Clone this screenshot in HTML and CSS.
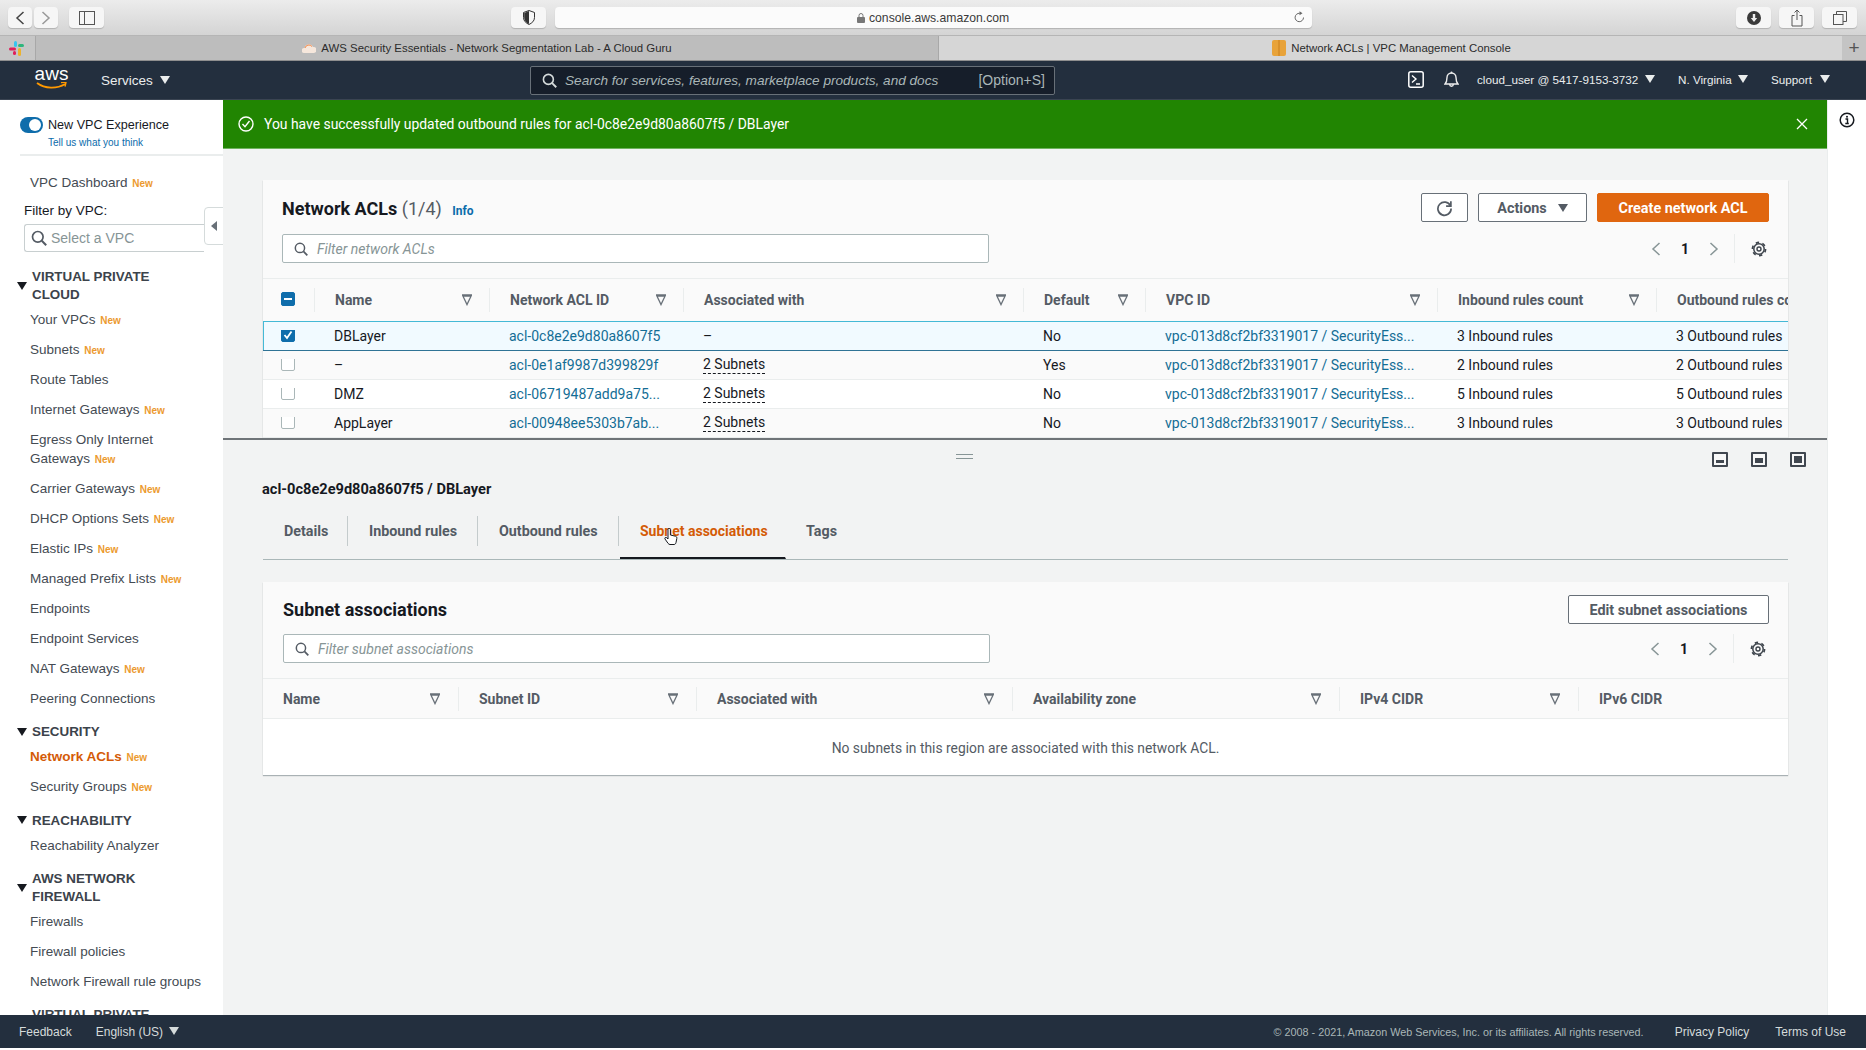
FILE: index.html
```html
<!DOCTYPE html>
<html lang="en">
<head>
<meta charset="utf-8">
<title>Network ACLs | VPC Management Console</title>
<link rel="stylesheet" href="styles.css">
</head>
<body>
<svg class="sprite" aria-hidden="true">
  <symbol id="i-search" viewBox="0 0 16 16"><circle cx="6.8" cy="6.8" r="5.3" fill="none" stroke="currentColor" stroke-width="1.7"/><path d="M10.8 10.8l4.4 4.4" stroke="currentColor" stroke-width="2" fill="none"/></symbol>
  <symbol id="i-filter" viewBox="0 0 12 12"><path d="M1 1h10M2 2.2h8L6 10.6z" fill="none" stroke="currentColor" stroke-width="1.3"/></symbol>
  <symbol id="i-gear" viewBox="0 0 16 16"><circle cx="8" cy="8" r="5.2" fill="none" stroke="currentColor" stroke-width="1.5"/><circle cx="8" cy="8" r="6.6" fill="none" stroke="currentColor" stroke-width="1.6" stroke-dasharray="3.4 3.5"/><circle cx="8" cy="8" r="2" fill="none" stroke="currentColor" stroke-width="1.4"/></symbol>
  <symbol id="i-prev" viewBox="0 0 10 16"><path d="M8.500 2L2 8l6.500 6" fill="none" stroke="currentColor" stroke-width="1.500"/></symbol>
  <symbol id="i-next" viewBox="0 0 10 16"><path d="M1.500 2L8 8l-6.500 6" fill="none" stroke="currentColor" stroke-width="1.500"/></symbol>
</svg>

<header class="toolbar">
  <div class="tool-group">
    <span class="tool tool-nav"><svg width="10" height="16"><use href="#i-prev"/></svg></span>
    <span class="tool tool-nav tool-dim"><svg width="10" height="16"><use href="#i-next"/></svg></span>
    <span class="tool tool-side"><svg width="16" height="14" viewBox="0 0 16 14"><rect x=".5" y=".5" width="15" height="13" fill="none" stroke="currentColor"/><path d="M5.500 1v12" stroke="currentColor"/></svg></span>
  </div>
  <span class="tool tool-shield"><svg width="12" height="15" viewBox="0 0 12 15"><path d="M6 .5l5.500 2v5c0 3.500-2.500 5.500-5.500 7-3-1.500-5.500-3.500-5.500-7v-5z" fill="none" stroke="#333"/><path d="M6 1v13C3.300 12.600 1.200 11 1.200 7.500V3z" fill="#333"/></svg></span>
  <div class="url">
    <svg class="url-lock" width="8" height="10" viewBox="0 0 8 10"><rect y="4" width="8" height="6" rx="1" fill="#777"/><path d="M2 4V2.500a2 2 0 014 0V4" fill="none" stroke="#777"/></svg>
    <span>console.aws.amazon.com</span>
    <svg class="url-reload" width="11" height="13" viewBox="0 0 11 13"><path d="M9.500 6.500a4.200 4.200 0 11-3.800-4.200" fill="none" stroke="#666"/><path d="M5.500 .2l3 2-3 2z" fill="#666"/></svg>
  </div>
  <div class="tool-group tool-right">
    <span class="tool tool-act"><svg width="14" height="14" viewBox="0 0 14 14"><circle cx="7" cy="7" r="7" fill="#3a3a3a"/><path d="M5.800 3h2.400v4h2L7 11 3.800 7h2z" fill="#eee"/></svg></span>
    <span class="tool tool-act"><svg width="12" height="18" viewBox="0 0 12 18"><path d="M3.500 6.500H1v10.500h10V6.500H8.500M6 11V1M3.500 3.500L6 1l2.500 2.500" fill="none" stroke="#555"/></svg></span>
    <span class="tool tool-act"><svg width="14" height="14" viewBox="0 0 14 14"><rect x=".5" y="3.500" width="9.500" height="10" fill="none" stroke="#555"/><path d="M3.500 3.500V.5h10v10h-3.500" fill="none" stroke="#555"/></svg></span>
  </div>
</header>

<nav class="tabstrip">
  <span class="tab-pin"><svg width="15" height="15" viewBox="0 0 15 15"><rect x="5" y="0" width="3" height="6" rx="1.500" fill="#36c5f0"/><rect x="9" y="3" width="6" height="3" rx="1.500" fill="#2eb67d"/><rect x="0" y="6.500" width="7" height="3" rx="1.500" fill="#e01e5a"/><rect x="9" y="7" width="3" height="8" rx="1.500" fill="#ecb22e"/><rect x="4" y="10" width="3" height="4" rx="1.500" fill="#e01e5a"/></svg></span>
  <span class="browser-tab">
    <svg width="14" height="10" viewBox="0 0 14 10"><path d="M2 10a2.500 2.500 0 01.500-5A4.500 4.500 0 0111 4a3 3 0 011 6z" fill="#f6e7dc"/><path d="M3 5a4 4 0 017-1.500" fill="none" stroke="#f28a4b"/></svg>
    AWS Security Essentials - Network Segmentation Lab - A Cloud Guru
  </span>
  <span class="browser-tab browser-tab-active">
    <svg width="14" height="16" viewBox="0 0 14 16"><rect width="14" height="16" rx="2" fill="#e8a33a"/><path d="M7 0v16" stroke="#c97e1c"/></svg>
    Network ACLs | VPC Management Console
  </span>
  <span class="tab-plus">+</span>
</nav>

<nav class="topnav">
  <span class="aws-logo">aws<svg width="31" height="9" viewBox="0 0 31 9"><path d="M1 1c8 6 20 6 28 1" fill="none" stroke="#f90" stroke-width="1.800"/><path d="M25 .6l5-.6-1 4.500" fill="none" stroke="#f90" stroke-width="1.500"/></svg></span>
  <span class="nav-services">Services <i class="caret"></i></span>
  <div class="nav-search">
    <svg width="15" height="15"><use href="#i-search"/></svg>
    <em>Search for services, features, marketplace products, and docs</em>
    <span>[Option+S]</span>
  </div>
  <div class="nav-right">
    <svg class="nav-term" width="16" height="17" viewBox="0 0 16 17"><rect x=".8" y=".8" width="14.400" height="15.400" rx="2" fill="none" stroke="#fff" stroke-width="1.500"/><path d="M4 4.500L8 8l-4 3.500M8 13h4" fill="none" stroke="#fff" stroke-width="1.400"/></svg>
    <svg class="nav-bell" width="15" height="17" viewBox="0 0 15 17"><circle cx="7.500" cy="1.500" r="1" fill="#eee"/><path d="M1 13c2-2 2-3 2-6.500a4.500 4.500 0 019 0c0 3.500 0 4.500 2 6.500zM5.700 13.500a1.800 1.800 0 003.600 0" fill="none" stroke="#eee" stroke-width="1.400"/></svg>
    <span class="nav-user">cloud_user @ 5417-9153-3732 <i class="caret"></i></span>
    <span class="nav-region">N. Virginia <i class="caret"></i></span>
    <span class="nav-support">Support <i class="caret"></i></span>
  </div>
</nav>

<div class="workspace">
  <aside class="sidebar">
    <div class="side-intro">
      <div class="side-toggle"><span class="switch"></span>New VPC Experience</div>
      <a class="side-tell">Tell us what you think</a>
    </div>
    <a class="side-item">VPC Dashboard <b>New</b></a>
    <div class="side-filter-label">Filter by VPC:</div>
    <div class="side-select"><svg width="16" height="16"><use href="#i-search"/></svg>Select a VPC</div>
    <span class="side-collapse"></span>

    <h3 class="side-head">VIRTUAL PRIVATE CLOUD</h3>
    <a class="side-item">Your VPCs <b>New</b></a>
    <a class="side-item">Subnets <b>New</b></a>
    <a class="side-item">Route Tables</a>
    <a class="side-item">Internet Gateways <b>New</b></a>
    <a class="side-item">Egress Only Internet Gateways <b>New</b></a>
    <a class="side-item">Carrier Gateways <b>New</b></a>
    <a class="side-item">DHCP Options Sets <b>New</b></a>
    <a class="side-item">Elastic IPs <b>New</b></a>
    <a class="side-item">Managed Prefix Lists <b>New</b></a>
    <a class="side-item">Endpoints</a>
    <a class="side-item">Endpoint Services</a>
    <a class="side-item">NAT Gateways <b>New</b></a>
    <a class="side-item">Peering Connections</a>
    <h3 class="side-head">SECURITY</h3>
    <a class="side-item side-current">Network ACLs <b>New</b></a>
    <a class="side-item">Security Groups <b>New</b></a>
    <h3 class="side-head">REACHABILITY</h3>
    <a class="side-item">Reachability Analyzer</a>
    <h3 class="side-head">AWS NETWORK FIREWALL</h3>
    <a class="side-item">Firewalls</a>
    <a class="side-item">Firewall policies</a>
    <a class="side-item">Network Firewall rule groups</a>
    <h3 class="side-head">VIRTUAL PRIVATE NETWORK</h3>
  </aside>

  <main class="main">
    <div class="flash">
      <svg width="16" height="16" viewBox="0 0 16 16"><circle cx="8" cy="8" r="7" fill="none" stroke="#fff" stroke-width="1.400"/><path d="M4.500 8l2.500 2.700L11.500 5" fill="none" stroke="#fff" stroke-width="1.400"/></svg>
      <span>You have successfully updated outbound rules for acl-0c8e2e9d80a8607f5 / DBLayer</span>
      <svg class="flash-close" width="12" height="12" viewBox="0 0 12 12"><path d="M1 1l10 10M11 1L1 11" stroke="#fff" stroke-width="1.300"/></svg>
    </div>

    <section class="pane-top">
      <div class="card card-top">
        <div class="card-head">
          <div class="head-row">
            <h2 class="card-title">Network ACLs <span>(1/4)</span> <a>Info</a></h2>
            <button class="btn btn-icon"><svg width="17" height="17" viewBox="0 0 16 16"><path d="M13.600 5.500A6.200 6.200 0 1014.200 8" fill="none" stroke="#545b64" stroke-width="1.600"/><path d="M14 1.200v4.500H9.500" fill="none" stroke="#545b64" stroke-width="1.600"/></svg></button>
            <button class="btn btn-actions">Actions <i class="caret caret-dark"></i></button>
            <button class="btn btn-primary">Create network ACL</button>
          </div>
          <div class="filter-row filter-row-top">
            <div class="filter"><svg width="14" height="14"><use href="#i-search"/></svg><em>Filter network ACLs</em></div>
            <div class="pager">
              <svg width="10" height="16"><use href="#i-prev"/></svg><b>1</b><svg width="10" height="16"><use href="#i-next"/></svg>
              <span class="pager-gear"><svg width="16" height="16"><use href="#i-gear"/></svg></span>
            </div>
          </div>
        </div>
        <div class="grid-acl grid-head">
          <div class="hcell hcell-check"><span class="check check-mixed"></span></div>
          <div class="hcell"><span>Name</span><svg width="12" height="12"><use href="#i-filter"/></svg></div>
          <div class="hcell"><span>Network ACL ID</span><svg width="12" height="12"><use href="#i-filter"/></svg></div>
          <div class="hcell"><span>Associated with</span><svg width="12" height="12"><use href="#i-filter"/></svg></div>
          <div class="hcell"><span>Default</span><svg width="12" height="12"><use href="#i-filter"/></svg></div>
          <div class="hcell"><span>VPC ID</span><svg width="12" height="12"><use href="#i-filter"/></svg></div>
          <div class="hcell"><span>Inbound rules count</span><svg width="12" height="12"><use href="#i-filter"/></svg></div>
          <div class="hcell hcell-last"><span>Outbound rules count</span></div>
        </div>
        <div class="grid-acl row row-selected">
          <div class="cell"><span class="check check-on"><svg width="10" height="10" viewBox="0 0 10 10"><path d="M1.500 5l2.500 3 4.500-6.500" fill="none" stroke="#fff" stroke-width="1.800"/></svg></span></div>
          <div class="cell">DBLayer</div><div class="cell"><a>acl-0c8e2e9d80a8607f5</a></div><div class="cell">–</div><div class="cell">No</div>
          <div class="cell"><a>vpc-013d8cf2bf3319017 / SecurityEss...</a></div><div class="cell">3 Inbound rules</div><div class="cell">3 Outbound rules</div>
        </div>
        <div class="grid-acl row row-alt">
          <div class="cell"><span class="check"></span></div>
          <div class="cell">–</div><div class="cell"><a>acl-0e1af9987d399829f</a></div><div class="cell"><u>2 Subnets</u></div><div class="cell">Yes</div>
          <div class="cell"><a>vpc-013d8cf2bf3319017 / SecurityEss...</a></div><div class="cell">2 Inbound rules</div><div class="cell">2 Outbound rules</div>
        </div>
        <div class="grid-acl row">
          <div class="cell"><span class="check"></span></div>
          <div class="cell">DMZ</div><div class="cell"><a>acl-06719487add9a75...</a></div><div class="cell"><u>2 Subnets</u></div><div class="cell">No</div>
          <div class="cell"><a>vpc-013d8cf2bf3319017 / SecurityEss...</a></div><div class="cell">5 Inbound rules</div><div class="cell">5 Outbound rules</div>
        </div>
        <div class="grid-acl row row-alt">
          <div class="cell"><span class="check"></span></div>
          <div class="cell">AppLayer</div><div class="cell"><a>acl-00948ee5303b7ab...</a></div><div class="cell"><u>2 Subnets</u></div><div class="cell">No</div>
          <div class="cell"><a>vpc-013d8cf2bf3319017 / SecurityEss...</a></div><div class="cell">3 Inbound rules</div><div class="cell">3 Outbound rules</div>
        </div>
      </div>
    </section>

    <section class="pane-bottom">
      <div class="pane-bar">
        <span class="pane-handle"></span>
        <div class="pane-icons">
          <span class="pane-icon pane-icon-low"></span>
          <span class="pane-icon pane-icon-mid"></span>
          <span class="pane-icon pane-icon-full"></span>
        </div>
      </div>
      <div class="pane-body">
        <h4 class="detail-title">acl-0c8e2e9d80a8607f5 / DBLayer</h4>
        <div class="tabs">
          <a class="tab">Details</a>
          <a class="tab">Inbound rules</a>
          <a class="tab">Outbound rules</a>
          <a class="tab tab-active">Subnet associations</a>
          <a class="tab tab-last">Tags</a>
          <svg class="cursor" width="14" height="18" viewBox="0 0 14 18"><path d="M4 1.500a1.200 1.200 0 012.400 0V7l5 1.200c1.200.3 1.600 1 1.400 2.300l-.8 4c-.2 1-.8 2-2 2H6c-.8 0-1.400-.4-1.900-1.100L1 11c-.7-1.200.8-2.200 1.800-1.200L4 11z" fill="#fff" stroke="#16191f"/></svg>
        </div>
        <div class="card card-bottom">
          <div class="card-head">
            <div class="head-row">
              <h2 class="card-title">Subnet associations</h2>
              <button class="btn btn-edit">Edit subnet associations</button>
            </div>
            <div class="filter-row filter-row-bottom">
              <div class="filter"><svg width="14" height="14"><use href="#i-search"/></svg><em>Filter subnet associations</em></div>
              <div class="pager">
                <svg width="10" height="16"><use href="#i-prev"/></svg><b>1</b><svg width="10" height="16"><use href="#i-next"/></svg>
                <span class="pager-gear"><svg width="16" height="16"><use href="#i-gear"/></svg></span>
              </div>
            </div>
          </div>
          <div class="grid-subnet grid-head">
            <div class="hcell"><span>Name</span><svg width="12" height="12"><use href="#i-filter"/></svg></div>
            <div class="hcell"><span>Subnet ID</span><svg width="12" height="12"><use href="#i-filter"/></svg></div>
            <div class="hcell"><span>Associated with</span><svg width="12" height="12"><use href="#i-filter"/></svg></div>
            <div class="hcell"><span>Availability zone</span><svg width="12" height="12"><use href="#i-filter"/></svg></div>
            <div class="hcell"><span>IPv4 CIDR</span><svg width="12" height="12"><use href="#i-filter"/></svg></div>
            <div class="hcell hcell-last"><span>IPv6 CIDR</span></div>
          </div>
          <div class="empty">No subnets in this region are associated with this network ACL.</div>
        </div>
      </div>
    </section>
  </main>

  <aside class="rail">
    <svg width="16" height="16" viewBox="0 0 16 16"><circle cx="8" cy="8" r="6.800" fill="none" stroke="#16191f" stroke-width="1.500"/><path d="M6.500 7h2v4.500M6.300 11.500h3.500" fill="none" stroke="#16191f" stroke-width="1.400"/><circle cx="8" cy="4.700" r="1" fill="#16191f"/></svg>
  </aside>
</div>

<footer class="footer">
  <a class="foot-feedback">Feedback</a>
  <span class="foot-lang">English (US) <i class="caret"></i></span>
  <span class="foot-copy">© 2008 - 2021, Amazon Web Services, Inc. or its affiliates. All rights reserved.</span>
  <a class="foot-privacy">Privacy Policy</a>
  <a class="foot-terms">Terms of Use</a>
</footer>
</body>
</html>
```

FILE: styles.css
```css
* { box-sizing: border-box; }
html, body { height: 100%; }
body {
  margin: 0;
  width: 1866px;
  height: 1050px;
  overflow: hidden;
  display: flex;
  flex-direction: column;
  background: #fff;
  font-family: "Liberation Sans", Arial, sans-serif;
  color: #16191f;
}
.sprite { display: none; }
a { color: inherit; text-decoration: none; }
button { font: inherit; cursor: pointer; }
h2, h3, h4 { margin: 0; }

.caret {
  display: inline-block;
  width: 0; height: 0;
  margin-left: 5px;
  vertical-align: 1px;
  border-left: 5px solid transparent;
  border-right: 5px solid transparent;
  border-top: 8px solid currentColor;
}

/* Browser toolbar */
.toolbar {
  height: 36px;
  flex: none;
  display: flex;
  align-items: center;
  padding: 0 9px 0 8px;
  background: linear-gradient(#ececec, #d4d4d4);
  border-bottom: 1px solid #b5b5b5;
}
.tool-group { display: flex; gap: 2px; }
.tool {
  height: 21px;
  display: flex;
  align-items: center;
  justify-content: center;
  background: #f6f6f6;
  border-radius: 4px;
  box-shadow: 0 1px 1px rgba(0,0,0,.18);
  color: #444;
}
.tool-nav { width: 24px; }
.tool-dim { color: #999; }
.tool-side { width: 35px; margin-left: 9px; color: #555; }
.tool-shield { width: 35px; margin-left: 407px; }
.url {
  width: 757px;
  height: 21px;
  margin-left: 9px;
  display: flex;
  align-items: center;
  background: #fbfbfb;
  border-radius: 4px;
  box-shadow: 0 1px 1px rgba(0,0,0,.18);
  font-size: 12.2px;
  color: #3a3a3a;
  padding-left: 302px;
}
.url-lock { margin-right: 4px; }
.url-reload { margin-left: auto; margin-right: 7px; }
.tool-right { margin-left: auto; gap: 8px; }
.tool-act { width: 35px; }

/* Browser tabs */
.tabstrip {
  height: 25px;
  flex: none;
  display: flex;
  font-size: 11.4px;
  color: #2b2b2b;
  background: #bdbdbd;
  border-bottom: 1px solid #8f8f8f;
}
.tab-pin {
  width: 36px;
  display: flex;
  align-items: center;
  padding-left: 9px;
  background: #c6c6c6;
  border-right: 1px solid #a8a8a8;
}
.browser-tab {
  width: 903px;
  display: flex;
  align-items: center;
  justify-content: center;
  gap: 5px;
  border-right: 1px solid #a8a8a8;
}
.browser-tab-active { width: 903px; background: #d6d6d6; border-right: 0; padding-left: 2px; }
.tab-plus {
  flex: 1;
  display: flex;
  align-items: center;
  justify-content: center;
  font-size: 19px;
  color: #555;
  background: #c4c4c4;
}

/* AWS console top bar */
.topnav {
  height: 39px;
  flex: none;
  display: flex;
  align-items: center;
  background: #232f3e;
  color: #eaeded;
  border-bottom: 1px solid #3a4452;
}
.aws-logo {
  width: 31px;
  margin-left: 36px;
  display: flex;
  flex-direction: column;
  align-items: center;
  color: #fff;
  font-size: 19px;
  line-height: 14px;
  margin-top: -2px;
}
.aws-logo svg { margin-top: 1px; }
.nav-services { margin-left: 34px; font-size: 13.5px; width: 70px; white-space: nowrap; }
.nav-services .caret { margin-left: 3px; }
.nav-search {
  width: 525px;
  height: 29px;
  margin-left: 359px;
  display: flex;
  align-items: center;
  padding: 0 9px 0 11px;
  background: #161e2a;
  border: 1px solid #687078;
  border-radius: 2px;
  color: #d5dbdb;
  font-size: 13.6px;
}
.nav-search em { margin-left: 8px; color: #aab7b8; }
.nav-search span { margin-left: auto; color: #aab7b8; font-size: 14px; }
.nav-right {
  margin-left: 353px;
  margin-top: -1px;
  display: flex;
  align-items: center;
  font-size: 11.7px;
  white-space: nowrap;
}
.nav-bell { margin-left: 20px; }
.nav-user { margin-left: 18px; width: 201px; }
.nav-region { width: 93px; }
.nav-right .caret { margin-left: 3px; }
.nav-right .nav-support .caret { margin-left: 5px; }

/* Workspace */
.workspace { flex: 1; min-height: 0; display: flex; }

/* Side navigation */
.sidebar {
  position: relative;
  width: 223px;
  flex: none;
  overflow: hidden;
  padding-top: 17px;
  background: #fff;
  font-size: 13.5px;
  color: #444b53;
}
.side-intro {
  margin-left: 20px;
  height: 39px;
  border-bottom: 2px solid #eaeded;
  margin-bottom: 11px;
}
.side-toggle {
  display: flex;
  align-items: center;
  height: 16px;
  font-size: 12.6px;
  color: #16191f;
}
.switch {
  width: 23px;
  height: 16px;
  margin-right: 5px;
  border-radius: 8px;
  background: #0f6dab;
  position: relative;
}
.switch::after {
  content: "";
  position: absolute;
  right: 2px;
  top: 2px;
  width: 12px;
  height: 12px;
  border-radius: 50%;
  background: #fff;
}
.side-tell {
  display: block;
  margin: 4px 0 0 28px;
  font-size: 10px;
  line-height: 12px;
  color: #0b6cab;
}
.side-item {
  display: block;
  padding: 5.5px 15px 5.5px 30px;
  line-height: 19px;
}
.side-item b {
  margin-left: 1px;
  font-size: 10px;
  line-height: 1;
  color: #ec9a2e;
}
.side-current { color: #d45b07; font-weight: 700; }
.side-filter-label {
  margin: 4px 0 0 24px;
  height: 19px;
  line-height: 19px;
  color: #16191f;
}
.side-select {
  width: 180px;
  height: 28px;
  margin: 4px 0 16px 24px;
  display: flex;
  align-items: center;
  gap: 4px;
  padding-left: 6px;
  border: 1px solid #c8cfd0;
  border-right: 0;
  border-radius: 3px 0 0 3px;
  font-size: 14px;
  color: #879596;
}
.side-select svg { color: #545b64; }
.side-collapse {
  position: absolute;
  left: 204px;
  top: 107px;
  width: 20px;
  height: 38px;
  background: #fff;
  border: 1px solid #d5dbdb;
  border-radius: 4px 0 0 4px;
}
.side-collapse::after {
  content: "";
  position: absolute;
  left: 6px;
  top: 13px;
  border-top: 5px solid transparent;
  border-bottom: 5px solid transparent;
  border-right: 6px solid #687078;
}
.side-head {
  position: relative;
  margin: 10px 30px 1px 0;
  padding-left: 32px;
  font-size: 13.4px;
  line-height: 17.5px;
  font-weight: 700;
  color: #3c434b;
}
.side-select + .side-collapse + .side-head { margin-top: 0; }
.side-head::before {
  content: "";
  position: absolute;
  left: 17px;
  top: 50%;
  margin-top: -4px;
  border-left: 5px solid transparent;
  border-right: 5px solid transparent;
  border-top: 8px solid #16191f;
}

/* Main */
.main {
  flex: 1;
  min-width: 0;
  display: flex;
  flex-direction: column;
  background: #f2f3f3;
  font-family: Roboto, "Liberation Sans", sans-serif;
  font-size: 14px;
}
.flash {
  height: 49px;
  flex: none;
  display: flex;
  align-items: center;
  padding: 0 19px 0 15px;
  background: #218502;
  border-bottom: 1px solid #6fb45f;
  color: #fff;
  font-size: 13.9px;
}
.flash span { margin-left: 10px; }
.flash-close { margin-left: auto; }

.pane-top {
  height: 291px;
  flex: none;
  padding: 31px 39px 0 40px;
  overflow: hidden;
  border-bottom: 2px solid #6f7478;
}
.card {
  background: #fafafa;
  box-shadow: 0 1px 1px rgba(0,28,36,.3);
  overflow: hidden;
}
.card-top { height: 260px; }
.card-head { padding: 13px 19px 15px 19px; }
.head-row { display: flex; align-items: center; height: 29px; }
.card-title { font-size: 18px; font-weight: 700; line-height: 29px; margin: 2px auto -2px 0; }
.card-bottom .card-title { margin-top: 0; margin-bottom: 0; }
.card-title span { font-weight: 400; color: #545b64; }
.card-title a { margin-left: 6px; font-size: 12px; font-weight: 700; color: #0b6cab; }

.btn {
  height: 29px;
  padding: 1px 0 0;
  background: #fff;
  border: 1px solid #687078;
  border-radius: 2px;
  font-weight: 700;
  font-size: 14.4px;
  color: #545b64;
  display: flex;
  align-items: center;
  justify-content: center;
}
.btn-icon { width: 47px; }
.btn-actions { width: 109px; margin-left: 10px; }
.caret-dark { margin-left: 11px; vertical-align: 0; }
.btn-primary {
  width: 172px;
  margin-left: 10px;
  background: #e0660f;
  border-color: #e0660f;
  color: #fff;
}
.btn-edit { width: 201px; }

.filter-row { display: flex; align-items: center; height: 29px; }
.filter-row-top { margin-top: 12px; }
.filter-row-bottom { margin-top: 10px; }
.filter {
  width: 707px;
  height: 29px;
  display: flex;
  align-items: center;
  padding-left: 11px;
  background: #fff;
  border: 1px solid #aab7b8;
  border-radius: 2px;
}
.filter svg { color: #545b64; }
.filter em { margin-left: 9px; color: #879596; }
.pager {
  margin-left: auto;
  display: flex;
  align-items: center;
  color: #879596;
  height: 29px;
}
.pager b { width: 48px; text-align: center; color: #16191f; font-size: 14px; }
.pager-gear {
  width: 35px;
  height: 29px;
  margin-left: 15px;
  padding-right: 2px;
  display: flex;
  align-items: center;
  justify-content: flex-end;
  border-left: 1px solid #eaeded;
  color: #3c434b;
}

/* Tables */
.grid-acl {
  display: grid;
  grid-template-columns: 52px 175px 194px 340px 122px 292px 219px 260px;
}
.grid-subnet {
  display: grid;
  grid-template-columns: 196px 238px 316px 327px 239px 209px;
}
.grid-head {
  height: 43px;
  align-items: center;
  border-top: 1px solid #eaeded;
  font-weight: 700;
  color: #545b64;
}
.grid-subnet.grid-head { height: 41px; border-bottom: 1px solid #eaeded; }
.hcell {
  height: 24px;
  display: flex;
  align-items: center;
  justify-content: space-between;
  padding: 0 16.5px 0 20px;
  border-right: 1px solid #eaeded;
  white-space: nowrap;
}
.grid-subnet .hcell { padding-right: 17px; }
.hcell svg { color: #687078; flex: none; }
.hcell-last { border-right: 0; justify-content: flex-start; }
.hcell-check { padding-left: 18px; }
.hcell-check .check { margin-top: -2px; }
.row {
  height: 29px;
  align-items: center;
  background: #fff;
  border-bottom: 1px solid #eaeded;
}
.row-alt { background: #fafafa; }
.row-selected {
  height: 30px;
  background: #f1faff;
  border-top: 1px solid #44b9d6;
  border-bottom: 1px solid #2f7395;
  box-shadow: inset 1px 0 0 #44b9d6;
}
.cell {
  padding-left: 19px;
  white-space: nowrap;
  overflow: hidden;
  display: flex;
  align-items: center;
}
.cell:first-child { padding-left: 18px; }
.cell .check { margin-top: -2px; }
.cell a { color: #136d95; }
.cell u {
  text-decoration: none;
  border-bottom: 1px dashed #16191f;
  line-height: 17px;
}
.check {
  width: 14px;
  height: 14px;
  display: flex;
  align-items: center;
  justify-content: center;
  background: #fff;
  border: 1px solid #aab7b8;
  border-radius: 2px;
}
.check-on, .check-mixed { background: #0f6dab; border-color: #0f6dab; }
.check-mixed::after { content: ""; width: 8px; height: 2px; background: #fff; }

/* Lower pane */
.pane-bottom { flex: 1; min-height: 0; }
.pane-bar {
  height: 30px;
  display: flex;
  align-items: center;
  padding: 0 21px 0 733px;
}
.pane-handle {
  width: 17px;
  height: 5px;
  margin-top: 2px;
  border-top: 1px solid #879596;
  border-bottom: 1px solid #879596;
}
.pane-icons { margin-left: auto; display: flex; gap: 23px; margin-top: 8px; }
.pane-icon {
  width: 16px;
  height: 15px;
  display: flex;
  align-items: flex-end;
  padding: 2px;
  border: 2.5px solid #414750;
  border-radius: 1px;
  background: #f8f8f8;
}
.pane-icon::after { content: ""; width: 100%; background: #414750; }
.pane-icon-low::after { height: 3px; }
.pane-icon-mid::after { height: 5px; }
.pane-icon-full::after { height: 100%; }

.pane-body { padding: 0 39px 0 40px; }
.detail-title { margin: 10px 0 0 -1px; font-size: 14.6px; line-height: 19px; font-weight: 700; white-space: nowrap; }
.tabs {
  position: relative;
  display: grid;
  grid-template-columns: 85px 130px 141px 167px 1fr;
  height: 44px;
  margin-top: 17px;
  border-bottom: 1px solid #aab7b8;
  font-weight: 700;
  font-size: 14.3px;
  color: #545b64;
}
.tab {
  height: 30px;
  line-height: 31px;
  padding-left: 21px;
  border-right: 1px solid #c4cbcc;
  white-space: nowrap;
}
.tab-last { border-right: 0; padding-left: 20px; }
.tab-active {
  color: #d45b07;
  font-size: 14px;
  height: 43px;
  margin-left: 1px;
  padding-left: 20px;
  border-right-color: transparent;
  border-bottom: 2px solid #16191f;
}
.cursor { position: absolute; left: 401px; top: 12px; }
.card-bottom { margin-top: 22px; height: 193px; }
.card-bottom .card-head { padding-left: 20px; padding-right: 20px; }
.card-bottom .btn-edit { margin-right: -1px; }
.empty {
  height: 56px;
  display: flex;
  align-items: center;
  justify-content: center;
  padding-top: 1px;
  background: #fff;
  color: #545b64;
  font-size: 13.85px;
}

/* Right rail */
.rail {
  width: 39px;
  flex: none;
  display: flex;
  justify-content: center;
  padding-top: 12px;
  background: #fff;
  border-left: 1px solid #eaeded;
}

/* Footer */
.footer {
  position: relative;
  z-index: 1;
  height: 33px;
  flex: none;
  margin-bottom: 2px;
  display: flex;
  align-items: center;
  padding: 0 20px 0 19px;
  background: #232f3e;
  color: #d5dbdb;
  font-size: 12px;
}
.foot-lang { margin-left: 24px; }
.foot-lang .caret { margin-left: 3px; }
.foot-copy { margin-left: auto; font-size: 10.8px; color: #aab7b8; }
.foot-privacy { margin-left: 31px; }
.foot-terms { margin-left: 26px; }
```
